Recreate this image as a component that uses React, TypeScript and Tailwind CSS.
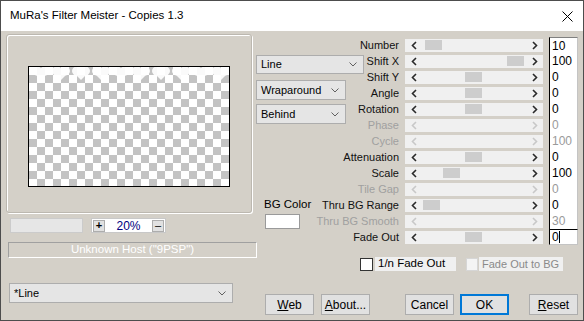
import React from "react";

type Row = { label: string; pos?: number; val: string; dis?: boolean; cursor?: boolean; rowCls: string };

const rows: Row[] = [
  { label: "Number", pos: 3, val: "10", rowCls: "row-start-1" },
  { label: "Shift X", pos: 85, val: "100", rowCls: "row-start-2" },
  { label: "Shift Y", pos: 43, val: "0", rowCls: "row-start-3" },
  { label: "Angle", pos: 43, val: "0", rowCls: "row-start-4" },
  { label: "Rotation", pos: 43, val: "0", rowCls: "row-start-5" },
  { label: "Phase", dis: true, val: "0", rowCls: "row-start-6" },
  { label: "Cycle", dis: true, val: "100", rowCls: "row-start-7" },
  { label: "Attenuation", pos: 43, val: "0", rowCls: "row-start-8" },
  { label: "Scale", pos: 21, val: "100", rowCls: "row-start-9" },
  { label: "Tile Gap", dis: true, val: "0", rowCls: "row-start-10" },
  { label: "Thru BG Range", pos: 1, val: "0", rowCls: "row-start-11" },
  { label: "Thru BG Smooth", dis: true, val: "30", rowCls: "row-start-12" },
  { label: "Fade Out", pos: 43, val: "0", cursor: true, rowCls: "row-start-13" },
];

function Chevron({ dir, disabled }: { dir: "l" | "r"; disabled?: boolean }) {
  return (
    <svg width="6" height="9" viewBox="0 0 6 9">
      <polyline
        points={dir === "l" ? "5,1 1.5,4.5 5,8" : "1,1 4.5,4.5 1,8"}
        fill="none"
        stroke={disabled ? "#c8c8c8" : "#2a2a2a"}
        strokeWidth="1.6"
      />
    </svg>
  );
}

function DownArrow() {
  return (
    <svg width="8" height="5" viewBox="0 0 8 5">
      <polyline points="0.5,0.5 4,4 7.5,0.5" fill="none" stroke="#606060" strokeWidth="1" />
    </svg>
  );
}

function Select({ label, className }: { label: string; className: string }) {
  return (
    <div
      className={`flex items-center justify-between bg-[#e5e5e5] border border-[#adadad] pl-[4px] pr-[6px] text-[11px] text-black ${className}`}
    >
      <span className="whitespace-nowrap">{label}</span>
      <DownArrow />
    </div>
  );
}

function Button({ children, ok, className }: { children: React.ReactNode; ok?: boolean; className: string }) {
  return (
    <div
      className={`h-[21px] w-[49px] flex items-center justify-center bg-[#e1e1e1] text-[12px] text-black ${
        ok ? "border-2 border-[#0078d7]" : "border border-[#adadad]"
      } ${className}`}
    >
      {children}
    </div>
  );
}

export default function App() {
  const blobs = [12, 32, 52, 72, 92, 112, 132, 152, 172, 192];
  return (
    <div className="w-[584px] h-[321px] bg-[#d4d0c8] border border-[#4d4d4d] flex flex-col font-['Liberation_Sans',Arial,sans-serif] overflow-hidden">
      {/* Title bar */}
      <div className="h-[30px] bg-white flex items-center justify-between pl-[9px] pr-[9px] shrink-0">
        <span className="text-[11.5px] text-black">MuRa's Filter Meister - Copies 1.3</span>
        <svg width="11" height="11" viewBox="0 0 11 11" className="mr-[1px]">
          <line x1="0.5" y1="0.5" x2="10.5" y2="10.5" stroke="#000" strokeWidth="1" />
          <line x1="10.5" y1="0.5" x2="0.5" y2="10.5" stroke="#000" strokeWidth="1" />
        </svg>
      </div>

      {/* Body */}
      <div className="flex flex-1 min-h-0">
        {/* Left column */}
        <div className="w-[255px] shrink-0 flex flex-col">
          <div className="ml-[5px] mt-[3px] w-[246px] h-[179px] border border-[#bcb8b0] rounded-[3px] shadow-[inset_1px_1px_0_#ffffff,1px_1px_0_#ffffff] flex justify-center pt-[31px]">
            <div className="relative w-[202px] h-[121px] border border-black bg-[image:conic-gradient(#c3c3c3_25%,#ffffff_0_50%,#c3c3c3_0_75%,#ffffff_0)] bg-size-[16px_16px]">
              <svg className="absolute left-0 top-0" width="200" height="18" viewBox="0 0 200 18">
                {blobs.map((x) => (
                  <g key={x} fill="#ffffff" opacity="0.92">
                    <ellipse cx={x - 4} cy="4" rx="5" ry="4.5" />
                    <ellipse cx={x + 4} cy="4" rx="5" ry="4.5" />
                    <polygon points={`${x - 8},5 ${x + 8},5 ${x},13`} />
                  </g>
                ))}
              </svg>
            </div>
          </div>

          <div className="flex items-center mt-[5px] h-[15px]">
            <div className="ml-[9px] w-[73px] h-[15px] bg-[#e6e6e6] border border-[#cbcbcb]" />
            <div className="ml-[8px] w-[75px] h-[15px] bg-white border border-[#c8c8c8] flex items-center justify-between px-px">
              <div className="w-[12px] h-[12px] bg-[#e1e1e1] border border-[#adadad] flex items-center justify-center text-[11px] font-bold leading-none text-black">
                +
              </div>
              <span className="text-[12px] text-[#000080] leading-none">20%</span>
              <div className="w-[12px] h-[12px] bg-[#e1e1e1] border border-[#adadad] flex items-center justify-center text-[11px] leading-none text-black">
                –
              </div>
            </div>
          </div>

          <div className="ml-[7px] mt-[9px] w-[249px] h-[16px] border-t border-l border-[#a0a0a0] border-b border-r border-b-white border-r-white flex items-center justify-center text-[11.5px] text-white">
            Unknown Host ("9PSP")
          </div>

          <Select label="*Line" className="ml-[8px] mt-[25px] w-[224px] h-[20px] pr-[4px]" />
        </div>

        {/* Right area */}
        <div className="flex-1 flex flex-col">
          <div className="grid grid-cols-[143px_138px_29px] gap-x-[6px] grid-rows-[repeat(13,16px)] mt-[6px]">
            <Select label="Line" className="col-start-1 row-start-2 row-span-2 self-start mt-[2px] w-[108px] h-[19px]" />
            <Select label="Wraparound" className="col-start-1 row-start-3 row-span-2 self-start mt-[11px] w-[90px] h-[20px]" />
            <Select label="Behind" className="col-start-1 row-start-5 row-span-2 self-start mt-[3px] w-[90px] h-[20px]" />
            <div className="col-start-1 row-start-11 self-center justify-self-start ml-[8px] text-[11.5px] text-black">BG Color</div>
            <div className="col-start-1 row-start-12 self-start justify-self-start ml-[9px] mt-[1px] w-[35px] h-[15px] bg-white border border-[#9a9a9a]" />

            {rows.map((r) => (
              <React.Fragment key={r.label}>
                <div
                  className={`col-start-1 ${r.rowCls} self-center justify-self-end text-[11px] leading-none ${
                    r.dis ? "text-[#a0a0a0]" : "text-[#111111]"
                  }`}
                >
                  {r.label}
                </div>
                <div className={`col-start-2 ${r.rowCls} self-center h-[13px] bg-[#f0f0f0] flex items-center`}>
                  <div className="w-[17px] flex justify-center">
                    <Chevron dir="l" disabled={r.dis} />
                  </div>
                  <div className="flex-1 h-full flex items-center">
                    {!r.dis && r.pos !== undefined && (
                      <div className="w-[17px] h-[10px] bg-[#cdcdcd]" style={{ marginLeft: r.pos }} />
                    )}
                  </div>
                  <div className="w-[17px] flex justify-center">
                    <Chevron dir="r" disabled={r.dis} />
                  </div>
                </div>
                <div
                  className={`col-start-3 ${r.rowCls} bg-white border-l border-l-black border-r border-r-[#c4c4c4] flex items-center pl-[2px] text-[12px] leading-none ${
                    r.dis ? "text-[#9a9a9a]" : "text-black"
                  } ${r.label === "Number" ? "border-t border-t-[#808080]" : ""} ${
                    r.label === "Fade Out" ? "border-t border-t-black border-b border-b-[#c4c4c4]" : ""
                  }`}
                >
                  <span>{r.val}</span>
                  {r.cursor && <span className="w-px h-[12px] bg-black" />}
                </div>
              </React.Fragment>
            ))}
          </div>

          {/* Checkboxes */}
          <div className="flex items-center mt-[12px] h-[14px] ml-[104px]">
            <div className="w-[13px] h-[13px] bg-white border border-[#333333]" />
            <div className="ml-[2px] w-[81px] h-[14px] bg-[#f0f0f0] flex items-center pl-[3px] text-[11.5px] text-black whitespace-nowrap">
              1/n Fade Out
            </div>
            <div className="ml-[10px] w-[12px] h-[13px] bg-[#f4f4f4] border border-[#d6d6d6]" />
            <div className="ml-[1px] w-[84px] h-[14px] bg-[#f0f0f0] flex items-center pl-[3px] text-[11px] text-[#8a8a8a] whitespace-nowrap">
              Fade Out to BG
            </div>
          </div>

          {/* Buttons */}
          <div className="flex items-center mt-[23px] ml-[9px]">
            <Button className="">
              <span>
                <span className="underline">W</span>eb
              </span>
            </Button>
            <Button className="ml-[7px]">
              <span>
                <span className="underline">A</span>bout...
              </span>
            </Button>
            <Button className="ml-[35px]">Cancel</Button>
            <Button ok className="ml-[6px]">
              OK
            </Button>
            <Button className="ml-[20px]">
              <span>
                <span className="underline">R</span>eset
              </span>
            </Button>
          </div>
        </div>
      </div>
    </div>
  );
}
